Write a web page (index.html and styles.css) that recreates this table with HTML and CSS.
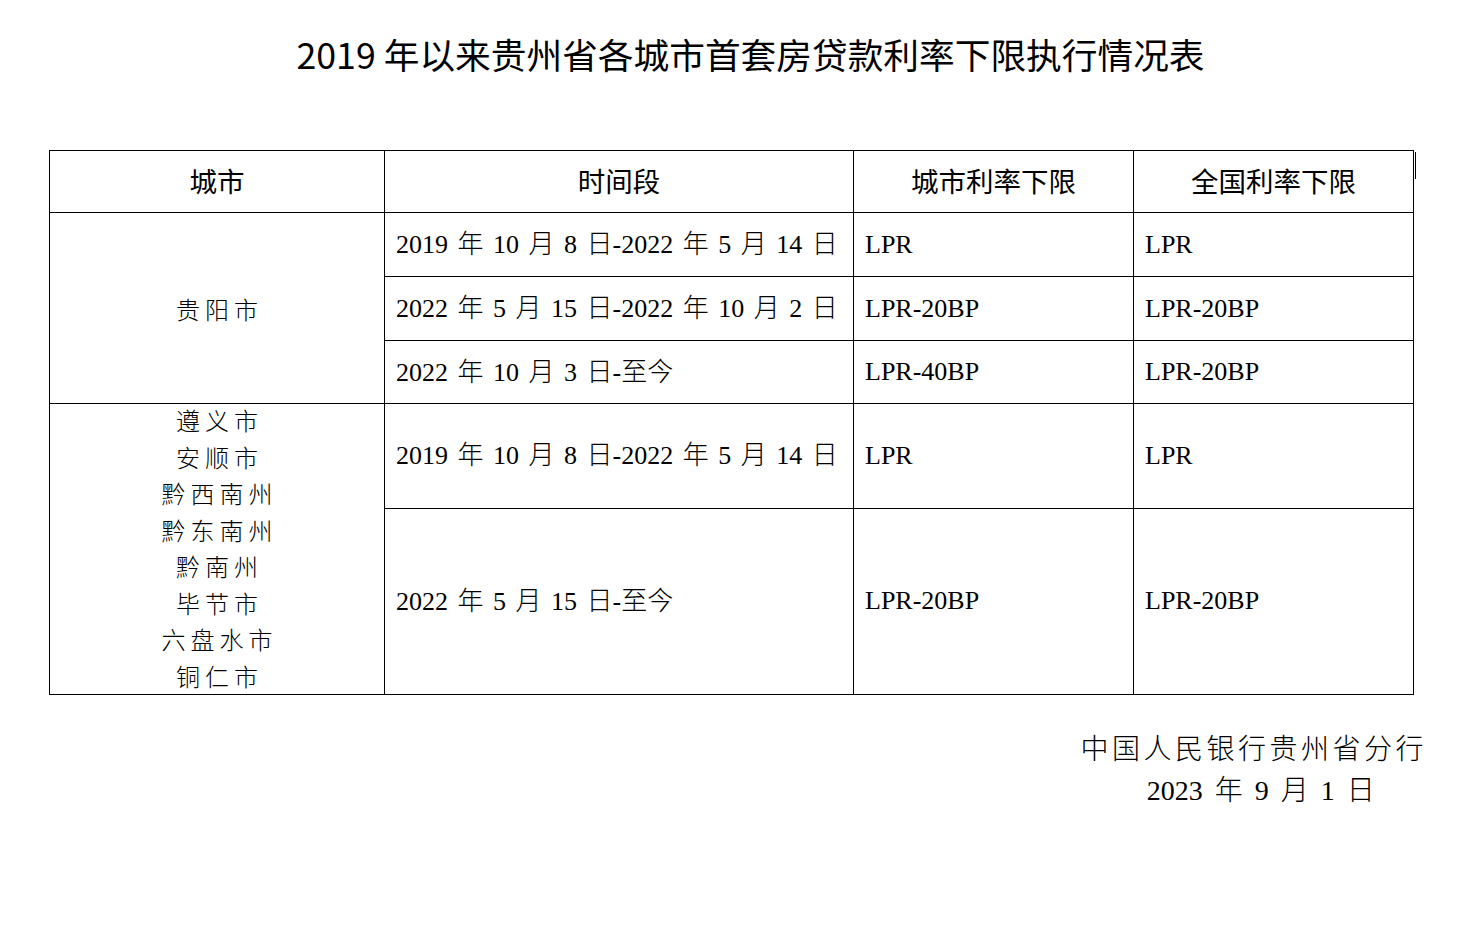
FILE: index.html
```html
<!DOCTYPE html>
<html lang="zh-CN">
<head>
<meta charset="utf-8">
<title>2019年以来贵州省各城市首套房贷款利率下限执行情况表</title>
<link rel="stylesheet" href="styles.css">
</head>
<body>
<div class="page">
  <h1 class="title">2019 年以来贵州省各城市首套房贷款利率下限执行情况表</h1>
  <div class="table-wrap">
    <table class="rates">
      <colgroup>
        <col class="c-city"><col class="c-period"><col class="c-rate"><col class="c-rate">
      </colgroup>
      <thead>
        <tr class="r-head">
          <th>城市</th><th>时间段</th><th>城市利率下限</th><th>全国利率下限</th>
        </tr>
      </thead>
      <tbody>
        <tr class="r1">
          <td class="city" rowspan="3"><span class="names">贵阳市</span></td>
          <td class="period">2019 年 10 月 8 日-2022 年 5 月 14 日</td><td>LPR</td><td>LPR</td>
        </tr>
        <tr class="r2">
          <td class="period">2022 年 5 月 15 日-2022 年 10 月 2 日</td><td>LPR-20BP</td><td>LPR-20BP</td>
        </tr>
        <tr class="r3">
          <td class="period">2022 年 10 月 3 日-至今</td><td>LPR-40BP</td><td>LPR-20BP</td>
        </tr>
        <tr class="r4">
          <td class="city list" rowspan="2">
            <div class="names">遵义市<br>安顺市<br>黔西南州<br>黔东南州<br>黔南州<br>毕节市<br>六盘水市<br>铜仁市</div>
          </td>
          <td class="period">2019 年 10 月 8 日-2022 年 5 月 14 日</td><td>LPR</td><td>LPR</td>
        </tr>
        <tr class="r5">
          <td class="period">2022 年 5 月 15 日-至今</td><td>LPR-20BP</td><td>LPR-20BP</td>
        </tr>
      </tbody>
    </table>
  </div>
  <div class="sign">
    <div class="org">中国人民银行贵州省分行</div>
    <div class="date">2023 年 9 月 1 日</div>
  </div>
</div>
</body>
</html>
```
FILE: styles.css
```css
html, body {
  margin: 0;
  padding: 0;
  background: #fff;
  color: #000;
}

.page {
  width: 1471px;
  min-height: 938px;
  display: flex;
  flex-direction: column;
}

.title {
  margin: 34px 0 0 0;
  padding-left: 30px;
  text-align: center;
  font-family: "Noto Sans CJK SC", sans-serif;
  font-weight: 400;
  font-size: 35.7px;
  line-height: 40px;
}

.table-wrap {
  position: relative;
  margin: 76px 0 0 49px;
  width: 1365px;
}

.table-wrap::after {
  content: "";
  position: absolute;
  left: 1366px;
  top: 2px;
  width: 1px;
  height: 27px;
  background: #000;
}

.rates {
  border-collapse: collapse;
  table-layout: fixed;
  width: 1365px;
  font-family: "Liberation Serif", "Noto Sans CJK SC", serif;
  font-size: 26px;
  font-weight: 300;
  word-spacing: 3px;
}

.c-city { width: 335px; }
.c-period { width: 469px; }
.c-rate { width: 280px; }

.rates th,
.rates td {
  border: 1px solid #000;
  padding: 0 0 0 11px;
  vertical-align: middle;
  text-align: left;
  white-space: nowrap;
  font-weight: 300;
}

.rates td.period {
  padding-bottom: 6px;
}

.rates th {
  font-family: "Noto Sans CJK SC", sans-serif;
  font-weight: 400;
  text-align: center;
  padding: 0 0 3px 0;
  font-size: 27.5px;
}

.r-head { height: 62px; }
.r1 { height: 64px; }
.r2 { height: 64px; }
.r3 { height: 63px; }
.r4 { height: 104px; }
.r5 { height: 185px; }

.rates td.city {
  text-align: center;
  padding: 0;
}

.names {
  font-family: "Noto Sans CJK SC", sans-serif;
  font-size: 24px;
  font-weight: 300;
  letter-spacing: 5px;
  padding-left: 5px;
}

.list .names {
  line-height: 36.5px;
  margin-top: -2px;
}

.sign {
  align-self: flex-end;
  margin: 31px 44px 0 0;
  display: flex;
  flex-direction: column;
  align-items: center;
  font-family: "Liberation Serif", "Noto Sans CJK SC", serif;
  font-size: 28px;
  font-weight: 300;
  line-height: 43px;
}

.org {
  font-family: "Noto Sans CJK SC", sans-serif;
  letter-spacing: 3.5px;
}

.date {
  word-spacing: 5px;
  padding-left: 14px;
}
```
